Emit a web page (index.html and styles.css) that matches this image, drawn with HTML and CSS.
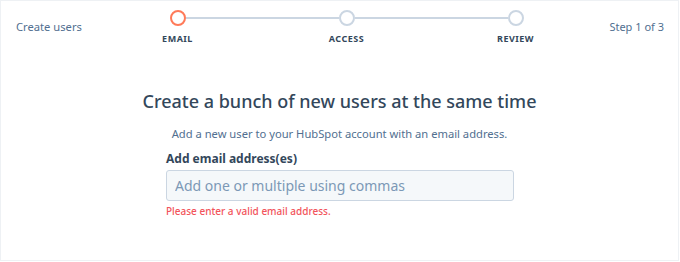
FILE: index.html
```html
<!DOCTYPE html>
<html lang="en">
<head>
<meta charset="utf-8">
<title>Create users</title>
<link rel="stylesheet" href="styles.css">
</head>
<body>
<div class="frame">
  <header class="header">
    <div class="header-title">Create users</div>
    <div class="stepper">
      <span class="dot dot-active"></span>
      <span class="line"></span>
      <span class="dot"></span>
      <span class="line"></span>
      <span class="dot"></span>
      <span class="step-label">EMAIL</span>
      <span class="step-label col3">ACCESS</span>
      <span class="step-label col5">REVIEW</span>
    </div>
    <div class="header-step">Step 1 of 3</div>
  </header>
  <main class="content">
    <h1 class="title">Create a bunch of new users at the same time</h1>
    <p class="subtitle">Add a new user to your HubSpot account with an email address.</p>
    <div class="field">
      <label class="field-label" for="emails">Add email address(es)</label>
      <input class="field-input" id="emails" type="text" placeholder="Add one or multiple using commas">
      <div class="field-error">Please enter a valid email address.</div>
    </div>
  </main>
</div>
</body>
</html>
```
FILE: styles.css
```css
html, body {
  margin: 0;
  padding: 0;
  background: #ffffff;
}
body {
  font-family: "Noto Sans", "DejaVu Sans", sans-serif;
  color: #33475b;
}
.frame {
  box-sizing: border-box;
  width: 679px;
  height: 261px;
  border: 1px solid #eef1f4;
  display: flex;
  flex-direction: column;
}
.header {
  display: flex;
  align-items: flex-start;
  padding: 0 14px 0 15px;
  height: 50px;
}
.header-title {
  flex: 1;
  font-size: 11.2px;
  color: #516f90;
  margin-top: 18px;
}
.header-step {
  flex: 1;
  text-align: right;
  font-size: 11px;
  color: #516f90;
  margin-top: 18px;
}
.stepper {
  width: 354px;
  margin-left: 13px;
  margin-top: 9px;
  display: grid;
  grid-template-columns: 16px 1fr 16px 1fr 16px;
  grid-template-rows: 16px auto;
  row-gap: 6px;
  align-items: center;
}
.dot {
  box-sizing: border-box;
  width: 16px;
  height: 16px;
  border-radius: 50%;
  border: 2px solid #cbd6e2;
  background: #ffffff;
}
.dot-active {
  border-color: #ff7a59;
}
.line {
  height: 2px;
  background: #cbd6e2;
}
.step-label {
  grid-row: 2;
  grid-column: 1;
  width: 0;
  justify-self: center;
  display: flex;
  justify-content: center;
  white-space: nowrap;
  font-size: 9px;
  font-weight: 700;
  letter-spacing: 0.5px;
  color: #33475b;
}
.step-label.col3 { grid-column: 3; }
.step-label.col5 { grid-column: 5; }
.content {
  display: flex;
  flex-direction: column;
  align-items: center;
}
.title {
  margin: 38px 0 0;
  font-size: 18px;
  font-weight: 500;
  color: #33475b;
  line-height: 24px;
}
.subtitle {
  margin: 13px 0 0;
  font-size: 11.2px;
  color: #516f90;
  line-height: 16px;
}
.field {
  width: 348px;
  margin-top: 9px;
  margin-left: 1px;
  display: flex;
  flex-direction: column;
}
.field-label {
  font-size: 12px;
  font-weight: 700;
  color: #33475b;
  line-height: 16px;
}
.field-input {
  box-sizing: border-box;
  margin-top: 3px;
  height: 31px;
  width: 100%;
  border: 1px solid #cbd6e2;
  border-radius: 3px;
  background: #f5f8fa;
  padding: 0 8px;
  font-family: inherit;
  font-size: 14px;
  color: #33475b;
}
.field-input::placeholder {
  color: #7c98b6;
}
.field-error {
  margin-top: 4px;
  font-size: 10px;
  font-weight: 500;
  color: #f2545b;
  line-height: 13px;
}
```
